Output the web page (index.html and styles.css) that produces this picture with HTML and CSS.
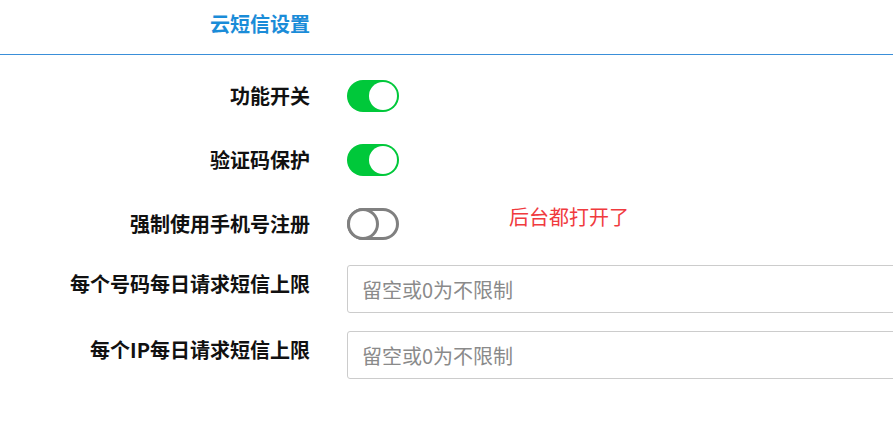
FILE: index.html
```html
<!DOCTYPE html>
<html lang="zh-CN">
<head>
  <meta charset="UTF-8">
  <title>云短信设置</title>
  <link rel="stylesheet" href="styles.css">
</head>
<body>
  <div class="panel-head">
    <h2 class="panel-title">云短信设置</h2>
  </div>

  <form class="settings">
    <div class="row">
      <label class="row-label">功能开关</label>
      <span class="switch on"><span class="knob"></span></span>
    </div>

    <div class="row">
      <label class="row-label">验证码保护</label>
      <span class="switch on"><span class="knob"></span></span>
    </div>

    <div class="row">
      <label class="row-label">强制使用手机号注册</label>
      <span class="switch off"><span class="knob"></span></span>
      <span class="note">后台都打开了</span>
    </div>

    <div class="row row-input">
      <label class="row-label" for="limitPhone">每个号码每日请求短信上限</label>
      <input class="text-input" type="text" id="limitPhone" placeholder="留空或0为不限制">
    </div>

    <div class="row row-input">
      <label class="row-label" for="limitIp">每个IP每日请求短信上限</label>
      <input class="text-input" type="text" id="limitIp" placeholder="留空或0为不限制">
    </div>
  </form>
</body>
</html>
```

FILE: styles.css
```css
body {
  margin: 0;
  background-color: #fff;
  font-family: "Noto Sans CJK SC", "Noto Sans", sans-serif;
  color: #111;
  overflow: hidden;
}
.panel-head {
  height: 54px;
  border-bottom: 1px solid #3a8fd9;
}
.panel-title {
  margin: 0;
  width: 310px;
  text-align: right;
  font-size: 20px;
  line-height: 48px;
  font-weight: bold;
  color: #1a8cd8;
}
.settings {
  display: flex;
  flex-direction: column;
  padding-top: 25px;
}
.row {
  display: flex;
  align-items: center;
  margin-bottom: 32px;
}
.row-label {
  width: 310px;
  flex-shrink: 0;
  text-align: right;
  font-size: 20px;
  line-height: 32px;
  font-weight: bold;
  color: #111;
}
.switch {
  display: flex;
  box-sizing: border-box;
  width: 52px;
  height: 32px;
  margin-left: 37px;
  border-radius: 16px;
  flex-shrink: 0;
}
.switch.on {
  background-color: #00c83a;
  padding: 2px;
  justify-content: flex-end;
}
.switch.on .knob {
  width: 28px;
  height: 28px;
  border-radius: 50%;
  background-color: #fff;
}
.switch.off {
  background-color: #fff;
  border: 3px solid #808080;
}
.switch.off .knob {
  box-sizing: border-box;
  width: 32px;
  height: 32px;
  margin: -3px;
  border-radius: 50%;
  border: 3px solid #808080;
  background-color: #fff;
}
.note {
  align-self: flex-start;
  margin-left: 110px;
  margin-top: -7px;
  font-size: 20px;
  line-height: 32px;
  color: #f03a3e;
}
.row-input {
  align-items: flex-start;
  margin-bottom: 18px;
}
.row-input:nth-child(4) {
  margin-top: -7px;
}
.row-input .row-label {
  padding-top: 3px;
}
.text-input {
  box-sizing: border-box;
  width: 600px;
  height: 48px;
  margin-left: 37px;
  padding: 0 14px;
  border: 1px solid #ccc;
  border-radius: 3px;
  font-family: "Noto Sans CJK SC", "Noto Sans", sans-serif;
  font-size: 20px;
  color: #333;
  flex-shrink: 0;
}
.text-input::placeholder {
  color: #8a8a8a;
}
```
